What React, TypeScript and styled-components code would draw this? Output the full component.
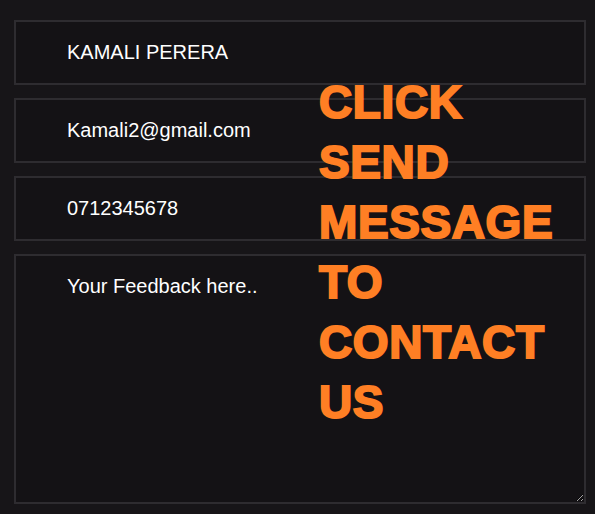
import * as React from 'react';
import styled, { createGlobalStyle } from 'styled-components';

const GlobalStyle = createGlobalStyle`
  html, body {
    margin: 0;
    padding: 0;
    background: #171518;
  }
  body {
    font-family: 'Liberation Sans', Arial, sans-serif;
  }
`;

const Page = styled.div`
  position: relative;
  width: 595px;
  height: 514px;
  background: #171518;
  overflow: hidden;
`;

const Form = styled.form`
  display: flex;
  flex-direction: column;
  gap: 13px;
  padding: 20px 9px 0 14px;
  width: 572px;
`;

const fieldBase = `
  box-sizing: border-box;
  width: 100%;
  margin: 0;
  background: #141215;
  border: 2px solid #2e2c30;
  color: #ffffff;
  font-family: 'Liberation Sans', Arial, sans-serif;
  font-size: 20px;
  outline: none;
`;

const TextField = styled.input`
  ${fieldBase}
  height: 65px;
  padding: 0 51px;
`;

const FeedbackField = styled.textarea`
  ${fieldBase}
  display: block;
  height: 250px;
  padding: 19px 51px;
  line-height: normal;
  resize: both;
`;

// big call to action floats over the form
const CallToAction = styled.div`
  position: absolute;
  left: 319px;
  top: 72px;
  color: #ff7f24;
  font-family: 'Liberation Sans', Arial, sans-serif;
  font-weight: 700;
  font-size: 46px;
  line-height: 60px;
  letter-spacing: 0.6px;
  -webkit-text-stroke: 2px #ff7f24;
  pointer-events: none;
`;

export default function App() {
  return (
    <Page>
      <GlobalStyle />
      <Form onSubmit={(e) => e.preventDefault()}>
        <TextField type="text" defaultValue="KAMALI PERERA" />
        <TextField type="email" defaultValue="Kamali2@gmail.com" />
        <TextField type="tel" defaultValue="0712345678" />
        <FeedbackField defaultValue="Your Feedback here.." />
      </Form>
      <CallToAction>
        CLICK
        <br />
        SEND
        <br />
        MESSAGE
        <br />
        TO
        <br />
        CONTACT
        <br />
        US
      </CallToAction>
    </Page>
  );
}
